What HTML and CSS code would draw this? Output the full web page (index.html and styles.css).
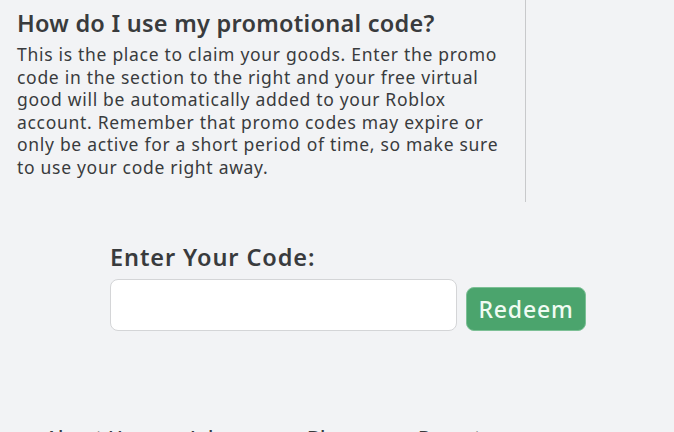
FILE: index.html
```html
<!DOCTYPE html>
<html lang="en">
<head>
    <meta charset="UTF-8">
    <meta name="viewport" content="width=device-width, initial-scale=1.0">
    <title>Redeem Promo Code</title>
    <link rel="stylesheet" href="styles.css">
</head>
<body>
    <div class="topo">
        <div class="ajuda">
            <h2>How do I use my promotional code?</h2>
            <p>This is the place to claim your goods. Enter the promo code in the section to the right and your free virtual good will be automatically added to your Roblox account. Remember that promo codes may expire or only be active for a short period of time, so make sure to use your code right away.</p>
        </div>
    </div>

    <!-- Formulario do codigo -->
    <div class="codigo">
        <label for="codigo">Enter Your Code:</label>
        <div class="linha">
            <input type="text" id="codigo">
            <button>Redeem</button>
        </div>
    </div>

    <div class="rodape">
        <a href="#">About Us</a>
        <a href="#">Jobs</a>
        <a href="#">Blog</a>
        <a href="#">Parents</a>
    </div>
</body>
</html>
```

FILE: styles.css
```css
* {
    margin: 0;
    padding: 0;
    box-sizing: border-box;
}

body {
    font-family: 'Noto Sans', sans-serif;
    background-color: #f2f3f5;
    color: #393b3d;
    overflow: hidden;
    height: 432px;
}

.topo {
    display: flex;
}

.ajuda {
    width: 526px;
    height: 202px;
    padding: 6px 8px 0 17px;
    border-right: 1px solid #c8c9cb;
}

.ajuda h2 {
    font-size: 23.5px;
    font-weight: 600;
    letter-spacing: 0.25px;
    line-height: 34px;
    margin-bottom: 3px;
}

.ajuda p {
    font-size: 17.5px;
    letter-spacing: 0.7px;
    line-height: 22.5px;
}

.codigo {
    padding: 40px 0 0 110px;
}

.codigo label {
    display: block;
    font-size: 23.5px;
    font-weight: 600;
    letter-spacing: 0.9px;
    line-height: 30px;
    margin-bottom: 7px;
}

.linha {
    display: flex;
    align-items: flex-end;
    gap: 9px;
}

.linha input {
    width: 347px;
    height: 52px;
    border: 1px solid #d4d5d7;
    border-radius: 8px;
    background-color: #fff;
}

.linha button {
    width: 120px;
    height: 44px;
    background-color: #4ba46d;
    border: 1px solid #7dc096;
    border-radius: 8px;
    color: #f0fbf3;
    font-family: 'Noto Sans', sans-serif;
    font-size: 23px;
    font-weight: 500;
    letter-spacing: 0.8px;
}

.rodape {
    display: flex;
    padding: 95px 0 0 45px;
}

.rodape a {
    color: #393b3d;
    text-decoration: none;
    font-size: 20px;
    font-weight: 500;
    line-height: 24px;
}

.rodape a:nth-child(1) { width: 145px; }
.rodape a:nth-child(2) { width: 117px; }
.rodape a:nth-child(3) { width: 111px; }
```
